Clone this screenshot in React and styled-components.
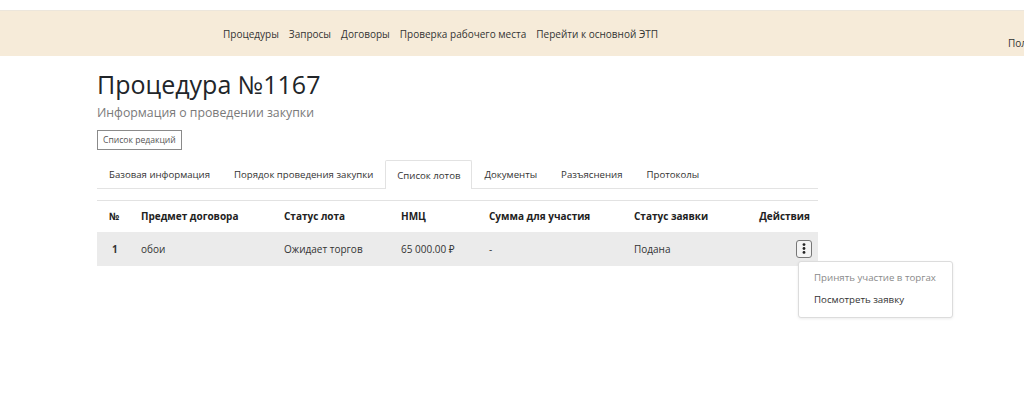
import React from 'react'
import styled, { createGlobalStyle } from 'styled-components'

const GlobalStyle = createGlobalStyle`
  html, body {
    margin: 0;
    padding: 0;
    background: #fff;
    overflow: hidden;
  }
  body {
    font-family: "Open Sans", "Noto Sans", sans-serif;
    color: #333;
  }
`

const navLinks = ['Процедуры', 'Запросы', 'Договоры', 'Проверка рабочего места', 'Перейти к основной ЭТП']
const tabs = ['Базовая информация', 'Порядок проведения закупки', 'Список лотов', 'Документы', 'Разъяснения', 'Протоколы']

const columns = [
  { title: '№', width: '32px' },
  { title: 'Предмет договора', width: '143px' },
  { title: 'Статус лота', width: '117px' },
  { title: 'НМЦ', width: '88px' },
  { title: 'Сумма для участия', width: '145px' },
  { title: 'Статус заявки', width: '110px' },
  { title: 'Действия', width: 'auto', right: true },
]

const App = () => {
  return (
    <>
      <GlobalStyle />
      <Page>
        <Navbar>
          <NavLinks>
            {navLinks.map((l) => (
              <NavLink key={l}>{l}</NavLink>
            ))}
          </NavLinks>
          <User>Пользователь</User>
        </Navbar>
        <Content>
          <Title>Процедура №1167</Title>
          <Subtitle>Информация о проведении закупки</Subtitle>
          <OutlineButton>Список редакций</OutlineButton>
          <Tabs>
            {tabs.map((t) => (
              <Tab key={t} $active={t === 'Список лотов'}>
                {t}
              </Tab>
            ))}
          </Tabs>
          <Table>
            <colgroup>
              {columns.map((c) => (
                <col key={c.title} style={c.width === 'auto' ? undefined : { width: c.width }} />
              ))}
            </colgroup>
            <thead>
              <tr>
                {columns.map((c) => (
                  <Th key={c.title} $right={c.right}>
                    {c.title}
                  </Th>
                ))}
              </tr>
            </thead>
            <tbody>
              <Row>
                <Td $bold>1</Td>
                <Td>обои</Td>
                <Td>Ожидает торгов</Td>
                <Td>65 000.00 ₽</Td>
                <Td>-</Td>
                <Td>Подана</Td>
                <Td $right>
                  <ActionsCell>
                    <KebabButton>
                      <svg width="4" height="11" viewBox="0 0 4 11">
                        <circle cx="2" cy="1.6" r="1.4" fill="#222" />
                        <circle cx="2" cy="5.5" r="1.4" fill="#222" />
                        <circle cx="2" cy="9.4" r="1.4" fill="#222" />
                      </svg>
                    </KebabButton>
                    <Menu>
                      <MenuItem $disabled>Принять участие в торгах</MenuItem>
                      <MenuItem>Посмотреть заявку</MenuItem>
                    </Menu>
                  </ActionsCell>
                </Td>
              </Row>
            </tbody>
          </Table>
        </Content>
      </Page>
    </>
  )
}

const Page = styled.div`
  width: 1024px;
  height: 394px;
  padding-top: 10px;
  box-sizing: border-box;
  overflow: hidden;
`

const Navbar = styled.nav`
  display: flex;
  height: 46px;
  background: #f6ebd9;
  border-top: 1px solid #ece6dc;
  box-sizing: border-box;
  overflow: hidden;
`

const NavLinks = styled.div`
  display: flex;
  align-items: center;
  gap: 10px;
  flex-shrink: 0;
  width: 1008px;
  padding-left: 223px;
  padding-top: 1px;
  box-sizing: border-box;
  height: 100%;
`

const NavLink = styled.a`
  font-size: 10px;
  color: #333;
  white-space: nowrap;
`

const User = styled.div`
  flex-shrink: 0;
  align-self: flex-end;
  padding-bottom: 6px;
  font-size: 10px;
  color: #333;
  white-space: nowrap;
`

const Content = styled.main`
  width: 721px;
  margin-left: 97px;
  display: flex;
  flex-direction: column;
  align-items: flex-start;
`

const Title = styled.h1`
  margin: 11px 0 0;
  font-size: 25px;
  line-height: 34px;
  font-weight: 500;
  color: #212529;
`

const Subtitle = styled.p`
  margin: 0;
  font-size: 12.3px;
  line-height: 23px;
  color: #7a7a7a;
`

const OutlineButton = styled.button`
  margin-top: 6px;
  height: 20px;
  padding: 0 5px;
  font-family: inherit;
  font-size: 8.6px;
  color: #555;
  background: #fff;
  border: 1px solid #8a8a8a;
  border-radius: 0;
`

const Tabs = styled.div`
  margin-top: 10px;
  display: flex;
  align-items: flex-end;
  align-self: stretch;
  border-bottom: 1px solid #e3e3e3;
`

const Tab = styled.div`
  height: 28px;
  box-sizing: border-box;
  display: flex;
  align-items: center;
  padding: 0 11px;
  font-size: 9.65px;
  color: #333;
  white-space: nowrap;
  border: 1px solid ${(p) => (p.$active ? '#e2e2e2' : 'transparent')};
  border-bottom: none;
  border-radius: 2px 2px 0 0;
  ${(p) =>
    p.$active &&
    `
    background: #fff;
    height: 29px;
    margin-bottom: -1px;
  `}
`

const Table = styled.table`
  margin-top: 11px;
  width: 100%;
  table-layout: fixed;
  border-collapse: collapse;
  border-top: 1px solid #e2e2e2;
`

const Th = styled.th`
  height: 31px;
  box-sizing: border-box;
  line-height: 14px;
  padding: 0 ${(p) => (p.$right ? '8px' : '4px')} 0 12px;
  text-align: ${(p) => (p.$right ? 'right' : 'left')};
  font-size: 10px;
  font-weight: 700;
  color: #222;
  white-space: nowrap;
`

const Row = styled.tr`
  background: #ebebeb;
`

const Td = styled.td`
  height: 34px;
  box-sizing: border-box;
  line-height: 14px;
  padding: 0 ${(p) => (p.$right ? '6px' : '4px')} 0 12px;
  font-size: 10px;
  color: #333;
  white-space: nowrap;
  font-weight: ${(p) => (p.$bold ? 700 : 400)};
  text-align: ${(p) => (p.$right ? 'right' : 'left')};
  &:first-child {
    padding-left: 15px;
  }
`

const ActionsCell = styled.div`
  position: relative;
  display: inline-block;
  vertical-align: middle;
`

const KebabButton = styled.button`
  width: 16px;
  height: 18px;
  padding: 0;
  display: flex;
  align-items: center;
  justify-content: center;
  background: #f4f4f4;
  border: 1px solid #777;
  border-radius: 3px;
`

const Menu = styled.div`
  position: absolute;
  top: 21px;
  left: 2px;
  width: 153px;
  padding: 5px 0 6px;
  background: #fff;
  border: 1px solid #dcdcdc;
  border-radius: 3px;
  box-shadow: 0 1px 3px rgba(0, 0, 0, 0.08);
  text-align: left;
  z-index: 2;
`

const MenuItem = styled.div`
  padding: 0 15px;
  height: 22px;
  display: flex;
  align-items: center;
  font-size: 9.7px;
  white-space: nowrap;
  color: ${(p) => (p.$disabled ? '#8a8a8a' : '#333')};
`

export default App
